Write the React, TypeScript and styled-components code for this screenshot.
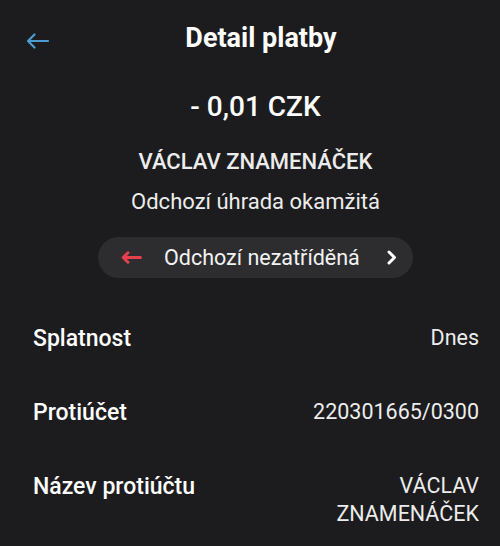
import styled, { createGlobalStyle } from "styled-components";

const GlobalStyle = createGlobalStyle`
  body {
    margin: 0;
    background: #1c1c1e;
    font-family: Roboto, "Liberation Sans", sans-serif;
    color: #f2f2f2;
  }
`;

const Screen = styled.div`
  width: 500px;
  height: 546px;
  overflow: hidden;
  background: #1c1c1e;
`;

const Header = styled.header`
  display: grid;
  grid-template-columns: 85px 1fr 63px;
  align-items: center;
  height: 80px;
`;

const BackButton = styled.button`
  background: none;
  border: 0;
  padding: 2px 0 0 26px;
  display: flex;
  align-items: center;
  color: #4b9dd0;
`;

const Title = styled.h1`
  margin: 0;
  padding-bottom: 4px;
  text-align: center;
  font-size: 27px;
  line-height: 32px;
  font-weight: 700;
  color: #fff;
`;

const Summary = styled.section`
  display: flex;
  flex-direction: column;
  align-items: center;
  padding-left: 11px;
`;

const Amount = styled.div`
  margin-top: 10px;
  font-size: 28px;
  line-height: 34px;
  font-weight: 500;
  color: #fff;
`;

const SummaryLine = styled.div<{ $gap: number; $weight: number }>`
  margin-top: ${(p) => p.$gap}px;
  font-size: 22px;
  font-weight: ${(p) => p.$weight};
  line-height: 26px;
  color: #ececec;
`;

const CategoryPill = styled.button`
  margin-top: 22px;
  height: 41px;
  width: 315px;
  border: 0;
  border-radius: 21px;
  background: #2d2d30;
  display: flex;
  align-items: center;
  padding: 0 16px 0 23px;
  font-family: inherit;
  font-size: 21.5px;
  color: #f2f2f2;
`;

const PillLabel = styled.span`
  margin-left: 22px;
  margin-right: auto;
`;

const Details = styled.dl`
  margin: 24px 0 0;
  padding: 0 21px 0 33px;
`;

const Row = styled.div`
  display: flex;
  justify-content: space-between;
  align-items: flex-start;
  padding: 22px 0;
`;

const Label = styled.dt`
  font-size: 23px;
  line-height: 30px;
  font-weight: 500;
  color: #fff;
`;

const Value = styled.dd`
  margin: 0;
  max-width: 170px;
  text-align: right;
  font-size: 21.5px;
  line-height: 28px;
  color: #ececec;
`;

export default function App() {
  return (
    <Screen>
      <GlobalStyle />
      <Header>
        <BackButton aria-label="Zpět">
          <svg width="23" height="16" viewBox="0 0 23 16" fill="none" stroke="currentColor" strokeWidth="2.2" strokeLinecap="round" strokeLinejoin="round">
            <path d="M22 8H2M8.5 1.5L2 8l6.5 6.5" />
          </svg>
        </BackButton>
        <Title>Detail platby</Title>
        <span />
      </Header>
      <Summary>
        <Amount>- 0,01 CZK</Amount>
        <SummaryLine $gap={25} $weight={500}>VÁCLAV ZNAMENÁČEK</SummaryLine>
        <SummaryLine $gap={14} $weight={400}>Odchozí úhrada okamžitá</SummaryLine>
        <CategoryPill>
          <svg width="21" height="13" viewBox="0 0 21 13" fill="none" stroke="#e5404c" strokeWidth="3" strokeLinecap="round" strokeLinejoin="round">
            <path d="M19.5 6.5H2.5M7 1.8L2.2 6.5 7 11.2" />
          </svg>
          <PillLabel>Odchozí nezatříděná</PillLabel>
          <svg width="11" height="15" viewBox="0 0 11 15" fill="none" stroke="#fff" strokeWidth="3" strokeLinecap="round" strokeLinejoin="round">
            <path d="M3 2l5.5 5.5L3 13" />
          </svg>
        </CategoryPill>
      </Summary>
      <Details>
        <Row>
          <Label>Splatnost</Label>
          <Value>Dnes</Value>
        </Row>
        <Row>
          <Label>Protiúčet</Label>
          <Value>220301665/0300</Value>
        </Row>
        <Row>
          <Label>Název protiúčtu</Label>
          <Value>VÁCLAV ZNAMENÁČEK</Value>
        </Row>
      </Details>
    </Screen>
  );
}
